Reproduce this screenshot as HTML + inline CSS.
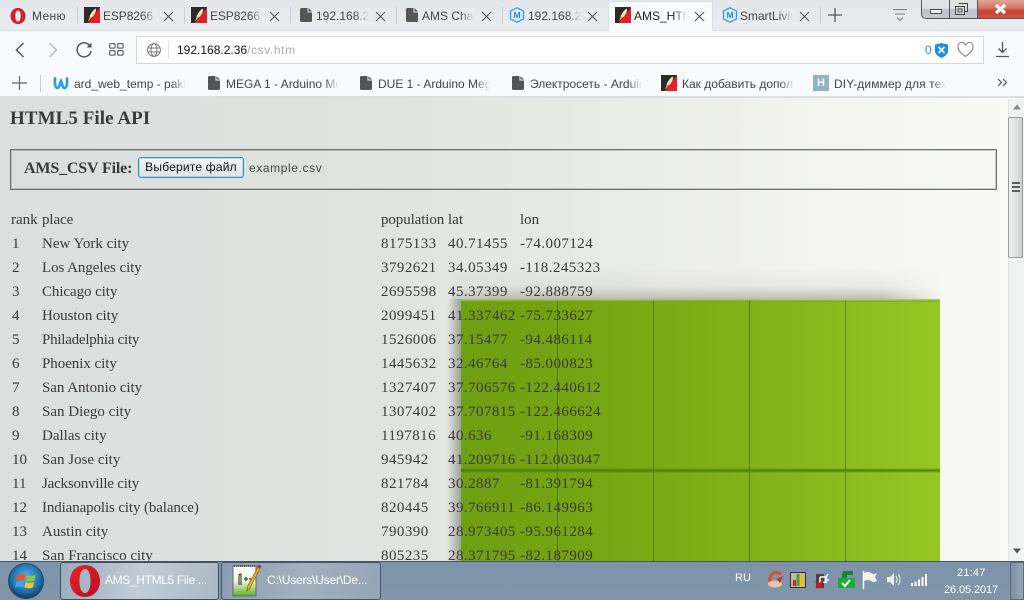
<!DOCTYPE html>
<html><head><meta charset="utf-8">
<style>
html,body{margin:0;padding:0;width:1024px;height:600px;overflow:hidden;background:#fff}
*{box-sizing:border-box}
.a{position:absolute;white-space:nowrap}
.ui{font-family:"Liberation Sans","DejaVu Sans",sans-serif;font-size:12px;color:#444;line-height:16px}
.fade{overflow:hidden}
.fade:after{content:"";position:absolute;right:0;top:0;bottom:0;width:14px;background:linear-gradient(90deg,rgba(232,236,241,0),#e8ecf1)}
.bm.fade:after{background:linear-gradient(90deg,rgba(249,250,251,0),#f9fafb)}
.act.fade:after{background:linear-gradient(90deg,rgba(249,250,251,0),#f9fafb)}
.sep{position:absolute;width:1px;background:#ccd0d6}
.t{position:absolute;font-family:"Liberation Serif",serif;font-size:15px;line-height:18px;color:#3a3a3a;white-space:nowrap}
.n{letter-spacing:.44px}
svg{position:absolute;display:block;overflow:visible}
</style></head><body>
<div class="a" id="page" style="left:0;top:98px;width:1024px;height:463px;background:linear-gradient(90deg,#dae0dd 0,#dce2de 30%,#e7e9e4 55%,#f3f4ef 80%,#f9faf5 100%)"></div>

<!-- green image -->
<div class="a" style="left:452px;top:268px;width:490px;height:31px;background:linear-gradient(180deg,rgba(200,200,196,0),rgba(200,200,196,.25) 60%,rgba(180,180,176,.85));-webkit-mask-image:linear-gradient(90deg,rgba(0,0,0,.6),#000 10%,#000 88%,transparent)"></div>
<div class="a" style="left:447px;top:299px;width:14px;height:262px;background:linear-gradient(90deg,rgba(130,135,130,0),rgba(110,120,100,.6))"></div>
<div class="a" style="left:461px;top:299px;width:479px;height:262px;background:linear-gradient(90deg,#6f9f12 0,#76a612 30%,#84b31a 65%,#97c724 100%)"></div>
<div class="a" style="left:461px;top:299px;width:479px;height:3px;background:linear-gradient(180deg,rgba(190,215,130,.8),rgba(100,150,20,.6))"></div>
<div class="a" style="left:461px;top:468px;width:479px;height:5px;background:linear-gradient(180deg,rgba(70,120,5,0),#4a7c06 50%,rgba(70,120,5,0))"></div>
<div class="a" style="left:557px;top:301px;width:1px;height:260px;background:#4a7c10"></div>
<div class="a" style="left:653px;top:301px;width:1px;height:260px;background:#4f8210"></div>
<div class="a" style="left:749px;top:301px;width:1px;height:260px;background:#4f8210"></div>
<div class="a" style="left:845px;top:301px;width:1px;height:260px;background:#568a14"></div>

<!-- content -->
<div class="t" style="left:10px;top:108px;font-size:19px;line-height:22px;font-weight:bold;letter-spacing:.07px">HTML5 File API</div>
<div class="a" style="left:10px;top:149px;width:987px;height:41px;border:1px solid #6d6f6c;box-shadow:inset 0 0 0 1px rgba(120,122,120,.35)"></div>
<div class="t" style="left:24px;top:160px;font-size:16px;font-weight:bold;letter-spacing:-.16px">AMS_CSV File:</div>
<div class="a" style="left:138px;top:157px;width:106px;height:21px;border:1px solid #3d8fb5;border-radius:3px;background:linear-gradient(180deg,#f4f6f7,#dfe3e6);box-shadow:0 0 0 1px rgba(90,170,210,.35) inset;font:12px/19px 'Liberation Sans',sans-serif;color:#111;text-align:center;letter-spacing:.2px">Выберите файл</div>
<div class="a" style="left:249px;top:160px;font:12px/17px 'Liberation Sans',sans-serif;color:#444;letter-spacing:.6px">example.csv</div>

<div class="t" style="left:11px;top:211px">rank</div><div class="t" style="left:42px;top:211px;letter-spacing:-.1px">place</div><div class="t" style="left:381px;top:211px;letter-spacing:-.1px">population</div><div class="t" style="left:448px;top:211px">lat</div><div class="t" style="left:520px;top:211px">lon</div>
<div class="t" style="left:12px;top:235px">1</div><div class="t" style="left:42px;top:235px">New York city</div><div class="t n" style="left:381px;top:235px">8175133</div><div class="t n" style="left:448px;top:235px">40.71455</div><div class="t n" style="left:520px;top:235px">-74.007124</div>
<div class="t" style="left:12px;top:259px">2</div><div class="t" style="left:42px;top:259px;letter-spacing:-.07px">Los Angeles city</div><div class="t n" style="left:381px;top:259px">3792621</div><div class="t n" style="left:448px;top:259px">34.05349</div><div class="t n" style="left:520px;top:259px">-118.245323</div>
<div class="t" style="left:12px;top:283px">3</div><div class="t" style="left:42px;top:283px;letter-spacing:-.08px">Chicago city</div><div class="t n" style="left:381px;top:283px">2695598</div><div class="t n" style="left:448px;top:283px">45.37399</div><div class="t n" style="left:520px;top:283px">-92.888759</div>
<div class="t" style="left:12px;top:307px">4</div><div class="t" style="left:42px;top:307px;letter-spacing:-.08px">Houston city</div><div class="t n" style="left:381px;top:307px">2099451</div><div class="t n" style="left:448px;top:307px">41.337462</div><div class="t n" style="left:520px;top:307px">-75.733627</div>
<div class="t" style="left:12px;top:331px">5</div><div class="t" style="left:42px;top:331px;letter-spacing:-.24px">Philadelphia city</div><div class="t n" style="left:381px;top:331px">1526006</div><div class="t n" style="left:448px;top:331px">37.15477</div><div class="t n" style="left:520px;top:331px">-94.486114</div>
<div class="t" style="left:12px;top:355px">6</div><div class="t" style="left:42px;top:355px;letter-spacing:-.05px">Phoenix city</div><div class="t n" style="left:381px;top:355px">1445632</div><div class="t n" style="left:448px;top:355px">32.46764</div><div class="t n" style="left:520px;top:355px">-85.000823</div>
<div class="t" style="left:12px;top:379px">7</div><div class="t" style="left:42px;top:379px;letter-spacing:-.05px">San Antonio city</div><div class="t n" style="left:381px;top:379px">1327407</div><div class="t n" style="left:448px;top:379px">37.706576</div><div class="t n" style="left:520px;top:379px">-122.440612</div>
<div class="t" style="left:12px;top:403px">8</div><div class="t" style="left:42px;top:403px">San Diego city</div><div class="t n" style="left:381px;top:403px">1307402</div><div class="t n" style="left:448px;top:403px">37.707815</div><div class="t n" style="left:520px;top:403px">-122.466624</div>
<div class="t" style="left:12px;top:427px">9</div><div class="t" style="left:42px;top:427px">Dallas city</div><div class="t n" style="left:381px;top:427px">1197816</div><div class="t n" style="left:448px;top:427px">40.636</div><div class="t n" style="left:520px;top:427px">-91.168309</div>
<div class="t" style="left:12px;top:451px">10</div><div class="t" style="left:42px;top:451px">San Jose city</div><div class="t n" style="left:381px;top:451px">945942</div><div class="t n" style="left:448px;top:451px">41.209716</div><div class="t n" style="left:520px;top:451px">-112.003047</div>
<div class="t" style="left:12px;top:475px">11</div><div class="t" style="left:42px;top:475px;letter-spacing:-.2px">Jacksonville city</div><div class="t n" style="left:381px;top:475px">821784</div><div class="t n" style="left:448px;top:475px">30.2887</div><div class="t n" style="left:520px;top:475px">-81.391794</div>
<div class="t" style="left:12px;top:499px">12</div><div class="t" style="left:42px;top:499px;letter-spacing:-.12px">Indianapolis city (balance)</div><div class="t n" style="left:381px;top:499px">820445</div><div class="t n" style="left:448px;top:499px">39.766911</div><div class="t n" style="left:520px;top:499px">-86.149963</div>
<div class="t" style="left:12px;top:523px">13</div><div class="t" style="left:42px;top:523px">Austin city</div><div class="t n" style="left:381px;top:523px">790390</div><div class="t n" style="left:448px;top:523px">28.973405</div><div class="t n" style="left:520px;top:523px">-95.961284</div>
<div class="t" style="left:12px;top:547px">14</div><div class="t" style="left:42px;top:547px">San Francisco city</div><div class="t n" style="left:381px;top:547px">805235</div><div class="t n" style="left:448px;top:547px">28.371795</div><div class="t n" style="left:520px;top:547px">-82.187909</div>

<!-- scrollbar -->
<div class="a" style="left:1008px;top:99px;width:16px;height:462px;background:#f1f2f2;border-left:1px solid #e4e6e6"></div>
<svg style="left:1012px;top:104px" width="10" height="6"><path d="M1 5.500H9L5 .5Z" fill="#888"/></svg>
<svg style="left:1012px;top:548px" width="10" height="6"><path d="M1 .5H9L5 5.500Z" fill="#555"/></svg>
<div class="a" style="left:1008px;top:117px;width:15px;height:141px;border:1px solid #9a9a9a;border-radius:2px;background:linear-gradient(90deg,#eeefef,#e0e1e1 55%,#cfd0d0)"></div>
<div class="a" style="left:1012px;top:182px;width:8px;height:10px;background:repeating-linear-gradient(180deg,#5c5c5c 0,#5c5c5c 2px,#e4e4e4 2px,#e4e4e4 4px)"></div>

<!-- tab strip -->
<div class="a" style="left:0;top:0;width:1024px;height:31px;background:linear-gradient(180deg,#e3e7ec,#e9edf1);border-bottom:1px solid #d5d8dc"></div>
<div class="a" style="left:608px;top:1px;width:105px;height:31px;background:#f9fafb;border:1px solid #dde0e3;border-bottom:0"></div>

<svg style="left:10px;top:8px" width="16" height="16" viewBox="0 0 16 16"><path fill-rule="evenodd" d="M8 0C12.500 0 15.500 3.500 15.500 8S12.500 16 8 16 .5 12.500 .5 8 3.500 0 8 0ZM8 2.500C6 2.500 5.300 5 5.300 8S6 13.500 8 13.500 10.700 11 10.700 8 10 2.500 8 2.500Z" fill="#d81d26"/></svg>
<div class="a ui" style="left:32px;top:8px;font-size:12px;letter-spacing:.35px">Меню</div>
<div class="sep" style="left:77px;top:7px;height:17px"></div>

<svg width="0" height="0" style="position:absolute"><defs>
<symbol id="ams" viewBox="0 0 16 16"><rect width="16" height="16" fill="#2b2b2b"/><path d="M16 0V16H4Z" fill="#e3202a"/><path d="M12 1.500C12.500 5 10 9 7 11L5.500 9.500C7 6 9 3 12 1.500Z" fill="#f3e6c0"/><path d="M5.500 10L7 11.500 4 14.500Z" fill="#f5b21d"/></symbol>
<symbol id="doc" viewBox="0 0 12 14"><path d="M1.500 0H7.500V4.500H12V12.500Q12 14 10.500 14H1.500Q0 14 0 12.500V1.500Q0 0 1.500 0ZM8.500 0 12 3.500H8.500Z" fill="#555"/></symbol>
<symbol id="mk" viewBox="0 0 16 16"><path d="M8 .8 14.500 4V12L8 15.200 1.500 12V4Z" fill="#d8ecfa" stroke="#4a9bd8" stroke-width="1.400"/><text x="8" y="11" font-family="Liberation Sans" font-size="8.500" font-weight="bold" text-anchor="middle" fill="#3c86c6">M</text></symbol>
<symbol id="xx" viewBox="0 0 11 11"><path d="M1 1 10 10M10 1 1 10" stroke="#555" stroke-width="1.100" fill="none"/></symbol>
</defs></svg>

<svg style="left:84px;top:7px" width="16" height="16"><use href="#ams" width="16" height="16"/></svg>
<div class="a ui fade" style="left:103px;top:8px;width:54px;letter-spacing:-.1px">ESP8266 W</div>
<svg style="left:163px;top:11px" width="11" height="11"><use href="#xx" width="11" height="11"/></svg>
<div class="sep" style="left:184px;top:7px;height:17px"></div>
<svg style="left:191px;top:7px" width="16" height="16"><use href="#ams" width="16" height="16"/></svg>
<div class="a ui fade" style="left:210px;top:8px;width:54px;letter-spacing:-.1px">ESP8266 W</div>
<svg style="left:269px;top:11px" width="11" height="11"><use href="#xx" width="11" height="11"/></svg>
<div class="sep" style="left:290px;top:7px;height:17px"></div>
<svg style="left:300px;top:8px" width="12" height="14"><use href="#doc" width="12" height="14"/></svg>
<div class="a ui fade" style="left:316px;top:8px;width:53px">192.168.2.36</div>
<svg style="left:375px;top:11px" width="11" height="11"><use href="#xx" width="11" height="11"/></svg>
<div class="sep" style="left:396px;top:7px;height:17px"></div>
<svg style="left:406px;top:8px" width="12" height="14"><use href="#doc" width="12" height="14"/></svg>
<div class="a ui fade" style="left:422px;top:8px;width:52px">AMS Chart</div>
<svg style="left:481px;top:11px" width="11" height="11"><use href="#xx" width="11" height="11"/></svg>
<div class="sep" style="left:502px;top:7px;height:17px"></div>
<svg style="left:509px;top:7px" width="16" height="16"><use href="#mk" width="16" height="16"/></svg>
<div class="a ui fade" style="left:528px;top:8px;width:53px">192.168.2.36</div>
<svg style="left:587px;top:11px" width="11" height="11"><use href="#xx" width="11" height="11"/></svg>
<svg style="left:615px;top:7px" width="16" height="16"><use href="#ams" width="16" height="16"/></svg>
<div class="a ui fade act" style="left:634px;top:8px;width:53px;color:#222">AMS_HTML5</div>
<svg style="left:694px;top:11px" width="11" height="11"><use href="#xx" width="11" height="11"/></svg>
<svg style="left:722px;top:7px" width="16" height="16"><use href="#mk" width="16" height="16"/></svg>
<div class="a ui fade" style="left:740px;top:8px;width:53px">SmartLiving</div>
<svg style="left:799px;top:11px" width="11" height="11"><use href="#xx" width="11" height="11"/></svg>
<div class="sep" style="left:820px;top:7px;height:17px"></div>
<svg style="left:828px;top:8px" width="14" height="14"><path d="M7 0V14M0 7H14" stroke="#555" stroke-width="1.300"/></svg>
<svg style="left:892px;top:8px" width="16" height="14"><path d="M1 1.500H15M3 6H13M5 9.500 8 12.500 11 9.500" stroke="#777" stroke-width="1" fill="none"/></svg>

<!-- window controls -->
<div class="a" style="left:921px;top:-1px;width:103px;height:20px;border:1px solid #4f555c;border-right:0;border-radius:0 0 0 5px;background:linear-gradient(180deg,#e2e5e8 0,#dfe2e5 45%,#bcc2c7 55%,#c5cacf 100%);overflow:hidden">
<div class="a" style="left:27px;top:0;width:29px;height:19px;border-left:1px solid #4f555c;border-right:1px solid #4f555c"></div>
<div class="a" style="left:56px;top:0;width:47px;height:19px;background:linear-gradient(180deg,#e2a398 0,#d9796a 40%,#c8402f 58%,#cf5a48 100%)"></div>
</div>
<div class="a" style="left:930px;top:9px;width:12px;height:5px;border:1px solid #4a4f55;background:#f0f0f0"></div>
<svg style="left:955px;top:3px" width="13" height="12"><path d="M3.500.5H12.500V8.500H9.500M.5 3.500H9.500V11.500H.5Z" fill="#d7dadd" stroke="#444"/><path d="M3 6H7V9H3Z" fill="none" stroke="#444"/></svg>
<svg style="left:994px;top:4px" width="13" height="10"><path d="M2 1 11 9M11 1 2 9" stroke="#fff" stroke-width="3.200"/></svg>

<!-- address bar -->
<div class="a" style="left:0;top:31px;width:1024px;height:67px;background:#f9fafb;border-bottom:2px solid #dcdee0"></div>
<svg style="left:13px;top:41px" width="16" height="18"><path d="M10.500 2 3.500 9 10.500 16" stroke="#555" stroke-width="1.500" fill="none"/></svg>
<svg style="left:44px;top:41px" width="16" height="18"><path d="M5.500 2 12.500 9 5.500 16" stroke="#bbb" stroke-width="1.500" fill="none"/></svg>
<svg style="left:76px;top:41px" width="17" height="17"><path d="M14.500 6A7 7 0 1 0 15 10" stroke="#555" stroke-width="1.500" fill="none"/><path d="M15.500 1.500V6.500H10.500Z" fill="#555"/></svg>
<svg style="left:109px;top:43px" width="15" height="13"><g fill="none" stroke="#666" stroke-width="1.200"><rect x=".6" y=".6" width="5.500" height="4.500" rx="1"/><rect x="8.600" y=".6" width="5.500" height="4.500" rx="1"/><rect x=".6" y="7.600" width="5.500" height="4.500" rx="1"/><rect x="8.600" y="7.600" width="5.500" height="4.500" rx="1"/></g></svg>
<div class="a" style="left:136px;top:36px;width:848px;height:28px;background:#fff;border:1px solid #d4d6d9"></div>
<svg style="left:147px;top:43px" width="14" height="14"><g fill="none" stroke="#777"><circle cx="7" cy="7" r="6.400"/><ellipse cx="7" cy="7" rx="3" ry="6.400"/><path d="M1 5H13M1 9H13"/></g></svg>
<div class="sep" style="left:168px;top:41px;height:18px;background:#dfe1e3"></div>
<div class="a ui" style="left:177px;top:42px;font-size:12px;color:#111">192.168.2.36<span style="color:#aaa;letter-spacing:.6px">/csv.htm</span></div>
<div class="a ui" style="left:925px;top:42px;font-size:12px;color:#2a93e8">0</div>
<svg style="left:935px;top:43px" width="13" height="15"><path d="M6.500 0 13 1.500V8Q13 12 6.500 15 0 12 0 8V1.500Z" fill="#1f8fe6"/><path d="M3.500 4 9.500 10M9.500 4 3.500 10" stroke="#fff" stroke-width="1.600"/></svg>
<svg style="left:957px;top:42px" width="17" height="16"><path d="M8.500 14.500C3 10.500 1 8 1 5A3.800 3.800 0 0 1 8.500 3.500 3.800 3.800 0 0 1 16 5C16 8 14 10.500 8.500 14.500Z" fill="none" stroke="#888" stroke-width="1.100"/></svg>
<svg style="left:995px;top:41px" width="15" height="17"><path d="M7.500 1V11M3.500 7.500 7.500 11.500 11.500 7.500M1 15.500H14" stroke="#555" stroke-width="1.300" fill="none"/></svg>

<!-- bookmarks -->
<svg style="left:12px;top:76px" width="15" height="14"><path d="M7.500 0V14M0 7H15" stroke="#666" stroke-width="1.200"/></svg>
<div class="sep" style="left:40px;top:75px;height:17px"></div>
<svg style="left:53px;top:76px" width="16" height="14"><path d="M2 2.500C1.500 9 2.500 12 4.500 12 6.500 12 7 7 8 5 9 7 9.500 12 11.500 12 13.500 12 14.500 9 14 2.500" fill="none" stroke="#2f9fe0" stroke-width="2.700" stroke-linecap="round"/></svg>
<div class="a ui fade bm" style="left:74px;top:76px;width:112px">ard_web_temp - pakhtang</div>
<svg style="left:208px;top:76px" width="12" height="14"><use href="#doc" width="12" height="14"/></svg>
<div class="a ui fade bm" style="left:226px;top:76px;width:113px">MEGA 1 - Arduino Mega</div>
<svg style="left:360px;top:76px" width="12" height="14"><use href="#doc" width="12" height="14"/></svg>
<div class="a ui fade bm" style="left:378px;top:76px;width:112px">DUE 1 - Arduino Mega</div>
<svg style="left:512px;top:76px" width="12" height="14"><use href="#doc" width="12" height="14"/></svg>
<div class="a ui fade bm" style="left:530px;top:76px;width:112px">Электросеть - Arduino</div>
<svg style="left:661px;top:75px" width="16" height="16"><use href="#ams" width="16" height="16"/></svg>
<div class="a ui fade bm" style="left:682px;top:76px;width:112px">Как добавить дополнение</div>
<div class="a" style="left:813px;top:75px;width:16px;height:16px;background:#8fb4c6;color:#fff;font:bold 11px/16px 'Liberation Sans',sans-serif;text-align:center">H</div>
<div class="a ui fade bm" style="left:834px;top:76px;width:112px;letter-spacing:.1px">DIY-диммер для техники</div>
<svg style="left:997px;top:78px" width="11" height="9"><path d="M1 1 4.500 4.500 1 8M6 1 9.500 4.500 6 8" stroke="#666" stroke-width="1.300" fill="none"/></svg>

<!-- taskbar -->
<div class="a" style="left:0;top:561px;width:1024px;height:39px;background:linear-gradient(180deg,#7f93a8,#8095aa);border-top:1px solid #45566a"></div>
<svg style="left:8px;top:562px" width="38" height="38" viewBox="0 0 38 38"><defs><radialGradient id="o" cx=".5" cy=".4" r=".6"><stop offset="0" stop-color="#5fb4e4"/><stop offset=".7" stop-color="#1c6ea8"/><stop offset="1" stop-color="#0c3a66"/></radialGradient></defs><circle cx="18" cy="19" r="17.500" fill="url(#o)" stroke="#30465c"/><path d="M9 13Q13 11 17.500 13L16.500 18.500Q12.500 16.500 8 18.500Z" fill="#e8562a"/><path d="M19 13.500Q23 15 27.500 13L26.500 18.500Q22.500 20 18 18.500Z" fill="#8ec63f"/><path d="M8 20Q12 18 16 20L15.500 25.500Q11 23.500 7 25.500Z" fill="#3ea6e4"/><path d="M17.500 20Q21.500 21.500 26 20L25 25.500Q21 27 16.500 25.500Z" fill="#f4c430"/></svg>
<div class="a" style="left:60px;top:562px;width:159px;height:38px;border:1px solid #40505f;border-radius:3px;background:linear-gradient(100deg,#9aabbb,#c2cdd7 50%,#aab9c6)"></div>
<svg style="left:70px;top:565px" width="30" height="32" viewBox="0 0 30 32"><defs><linearGradient id="r" x1="0" y1="0" x2="1" y2="1"><stop offset="0" stop-color="#e8252f"/><stop offset="1" stop-color="#b80f1a"/></linearGradient></defs><path fill-rule="evenodd" d="M15 0C24 0 30 7 30 16S24 32 15 32 0 25 0 16 6 0 15 0ZM15 4C11 4 9.500 10 9.500 16S11 28 15 28 20.500 22 20.500 16 19 4 15 4Z" fill="url(#r)"/></svg>
<div class="a ui" style="left:105px;top:572px;font-size:12px;color:#fff;letter-spacing:-.35px">AMS_HTML5 File ...</div>
<div class="a" style="left:221px;top:562px;width:160px;height:38px;border:1px solid #46566a;border-radius:3px;background:linear-gradient(100deg,#8a9db0,#a2b1bf 50%,#93a5b6)"></div>
<svg style="left:232px;top:563px" width="31" height="35" viewBox="0 0 31 35"><defs><linearGradient id="g" x1="0" y1="0" x2="0" y2="1"><stop offset="0" stop-color="#fff"/><stop offset=".5" stop-color="#eef6d8"/><stop offset="1" stop-color="#58b020"/></linearGradient></defs><rect x="1" y="3" width="23" height="30" fill="url(#g)" stroke="#667"/><path d="M2 3H23" stroke="#555" stroke-dasharray="1 1" stroke-width="2"/><path d="M7 22V13Q7 11 9 11V22M12 16H16M14 14V18M17 16H21" stroke="#222" fill="none"/><path d="M27 2 29 3.500 18 25 15 28 15.500 23.500Z" fill="#e8b020" stroke="#7a5a10" stroke-width=".6"/><path d="M26 1.500 29.500 3.500 28 6 25 4Z" fill="#a04030"/></svg>
<div class="a ui" style="left:267px;top:572px;font-size:12px;color:#fff;letter-spacing:-.2px">C:\Users\User\De...</div>

<div class="a ui" style="left:735px;top:570px;font-size:11px;color:#fff">RU</div>
<svg style="left:767px;top:571px" width="18" height="18"><path d="M14 3Q8 -1 4 5 1 10 5 13" fill="none" stroke="#d8502c" stroke-width="3"/><ellipse cx="8" cy="13" rx="7" ry="3.500" fill="#e7c5a8"/><path d="M9 8 16 5 13 12Z" fill="#c83a28"/></svg>
<div class="a" style="left:790px;top:572px;width:16px;height:16px;background:#c5b8a0;border:1px solid #333"></div>
<svg style="left:792px;top:573px" width="12" height="14"><path d="M1 7H4V13H1Z" fill="#d22"/><path d="M4.500 1H7.500V13H4.500Z" fill="#3a3"/><path d="M8 4H11V13H8Z" fill="#fb0"/></svg>
<svg style="left:814px;top:571px" width="16" height="18"><path d="M2 3H10V17H2Z" fill="#444"/><path d="M6 6H12L14 3M12 9H15M6 6V11H12V6" stroke="#fff" stroke-width="1.500" fill="none"/><path d="M2 10 9 17M9 10 2 17" stroke="#d8141f" stroke-width="2"/></svg>
<svg style="left:838px;top:570px" width="17" height="19"><path d="M0 8H17V18H0Z" fill="#1fa83a"/><path d="M4 8V4Q4 1 8 1H15V5H9V8Z" fill="#138a2a"/><path d="M4 13 7 16 12 10" stroke="#fff" stroke-width="2" fill="none"/></svg>
<svg style="left:862px;top:571px" width="16" height="18"><path d="M1.500 0V18" stroke="#fff" stroke-width="1.500"/><path d="M2 2Q6 0 9 2T15 2L13 6 15 10Q12 12 9 10T2 10Z" fill="#eef2f5"/></svg>
<svg style="left:886px;top:572px" width="16" height="15"><path d="M1 5H4L8 1V14L4 10H1Z" fill="#e8edf2"/><path d="M10 4Q12 7.500 10 11M12.500 2Q15.500 7.500 12.500 13" stroke="#e8edf2" fill="none"/></svg>
<svg style="left:910px;top:574px" width="17" height="12"><path d="M1 9H3V12H1ZM4.500 7.500H6.500V12H4.500ZM8 5.500H10V12H8ZM11.500 3H13.500V12H11.500ZM15 0H17V12H15Z" fill="#fff"/></svg>
<div class="a ui" style="left:957px;top:565px;font-size:11px;color:#fff;letter-spacing:.2px">21:47</div>
<div class="a ui" style="left:944px;top:582px;font-size:11px;color:#fff;letter-spacing:-.1px">26.05.2017</div>
<div class="a" style="left:1010px;top:562px;width:14px;height:38px;border:1px solid #5c6c7c;background:linear-gradient(90deg,#7e90a2,#96a6b5)"></div>
</body></html>
